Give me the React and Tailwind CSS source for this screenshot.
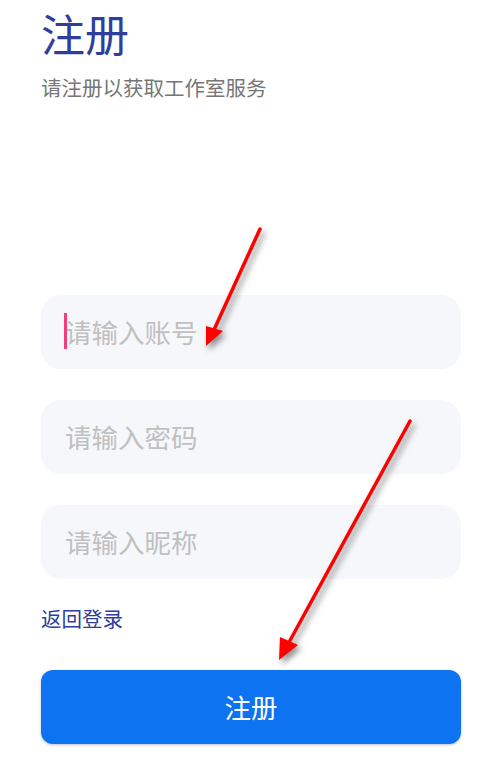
import React from "react";

const font = { fontFamily: '"Noto Sans CJK SC", "Noto Sans", sans-serif' };

const Field = ({ placeholder, focused }) => (
  <div className="relative flex h-[74px] items-center rounded-[20px] bg-[#f6f7fb] pl-[24px] pr-4">
    {focused && <span className="absolute left-[23px] top-[18px] h-[36px] w-[3px] bg-[#f33d7c]" />}
    <input
      className="min-w-0 flex-1 bg-transparent text-[26.5px] text-[#333] outline-none placeholder:text-[#c0c0c0]"
      placeholder={placeholder}
    />
  </div>
);

const Arrows = () => (
  <svg
    className="pointer-events-none absolute left-0 top-0 h-[772px] w-[480px] [filter:drop-shadow(3px_4px_3px_rgba(0,0,0,0.45))]"
    viewBox="0 0 480 772"
  >
    <line x1="260" y1="229" x2="213" y2="332" stroke="#ff0000" strokeWidth="3.5" strokeLinecap="round" />
    <polygon points="206,346 206,326 223,331" fill="#ff0000" />
    <line x1="410" y1="421" x2="287" y2="646" stroke="#ff0000" strokeWidth="3.5" strokeLinecap="round" />
    <polygon points="279,660 280,637 298,645" fill="#ff0000" />
  </svg>
);

export default function App() {
  return (
    <div className="relative h-[772px] w-[480px] overflow-hidden bg-white" style={font}>
      <div className="flex flex-col pl-[41px] pr-[19px]">
        <h1 className="mt-[9px] text-[44px] leading-[48px] text-[#2f3d9c]">注册</h1>
        <p className="mt-[16px] text-[20.5px] leading-[28px] text-[#767676]">请注册以获取工作室服务</p>

        <div className="mt-[194px] flex flex-col gap-[31px]">
          <Field placeholder="请输入账号" focused />
          <Field placeholder="请输入密码" />
          <Field placeholder="请输入昵称" />
        </div>

        <a className="mt-[25px] self-start text-[20.5px] leading-[28px] text-[#2f3d9c]">返回登录</a>

        <button className="mt-[38px] h-[74px] rounded-[12px] bg-[#0d73f0] text-[26.5px] text-white shadow-[0_1px_3px_rgba(0,0,0,0.25)]">
          注册
        </button>
      </div>
      <Arrows />
    </div>
  );
}
